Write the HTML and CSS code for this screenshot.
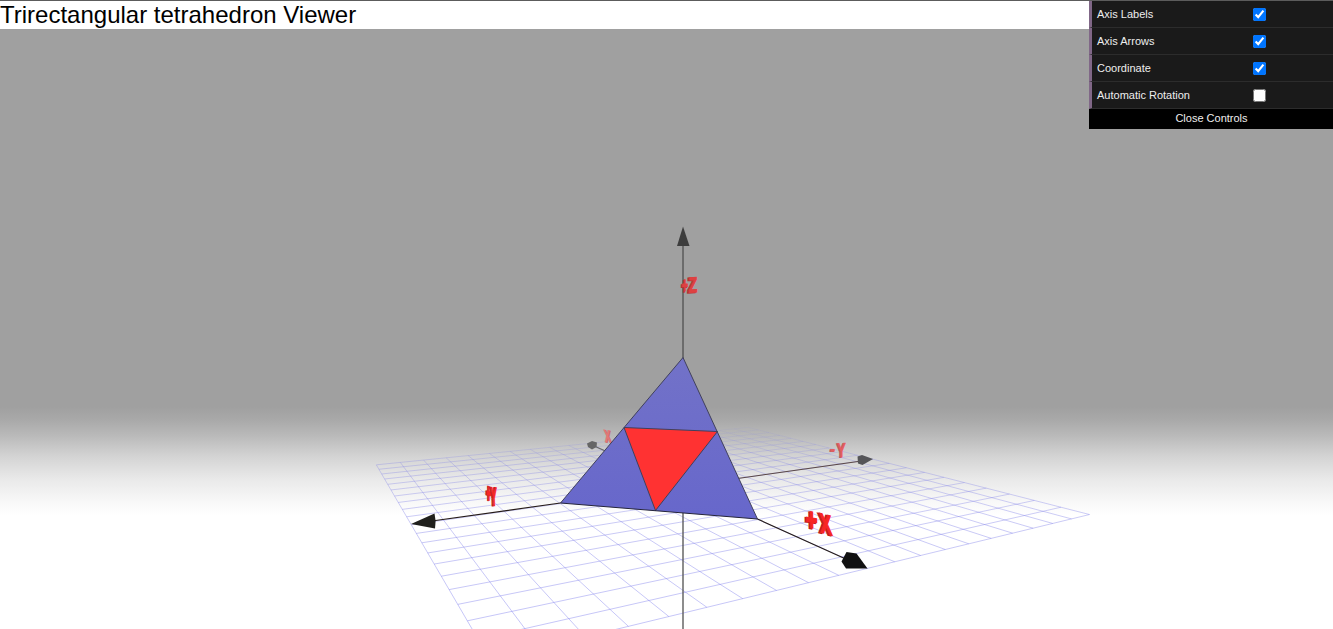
FILE: index.html
```
<!DOCTYPE html>
<html lang="en">
<head>
<meta charset="utf-8">
<title>Trirectangular tetrahedron Viewer</title>
<link rel="stylesheet" href="styles.css">
</head>
<body>
<div class="viewer">
  <header class="title">Trirectangular tetrahedron Viewer</header>
  <main class="stage">
    <svg class="scene" viewBox="0 29 1333 600" width="1333" height="600">
      <defs>
        <linearGradient id="face" x1="0" y1="0" x2="0" y2="1">
          <stop offset="0" stop-color="#7272c8"/>
          <stop offset="1" stop-color="#6767cb"/>
        </linearGradient>
        <linearGradient id="gridFog" gradientUnits="userSpaceOnUse" x1="0" y1="424" x2="0" y2="629">
          <stop offset="0" stop-color="#8080e6" stop-opacity=".05"/>
          <stop offset=".2" stop-color="#8080e6" stop-opacity=".32"/>
          <stop offset=".5" stop-color="#8080e8" stop-opacity=".42"/>
          <stop offset="1" stop-color="#8080f0" stop-opacity=".45"/>
        </linearGradient>
      </defs>
      <path id="grid" class="grid"/>

      <!-- axes behind the solid -->
      <path class="axis-far" d="M592 445 683 486"/>
      <path class="axis-y" d="M683 486.200 858 461.500"/>
      <path class="axis-z" d="M683 240V629"/>
      <path fill="#666" d="M587 443.500 592 441 597 442.500 596.500 447 592 449.500 588 447Z"/>
      <path fill="#555558" d="M857.500 456.500 862 455 873 459 862.500 465 858 463.500Z"/>
      <path fill="#3d3d3d" d="M683 226.500 689.500 246H677Z"/>

      <g class="label label-far">
        <text class="side" transform="matrix(.8 .12 .2 1.500 606 442.500)">X</text>
        <text transform="matrix(.8 .12 .2 1.500 605 442)">X</text>
      </g>
      <g class="label label-mid">
        <text class="side" transform="matrix(1.300 -.03 0 1.350 829.300 455)">-</text>
        <text transform="matrix(1.300 -.03 0 1.350 830 454.500)">-</text>
        <text class="side" transform="matrix(1.100 -.03 0 1.700 836 457.800)">Y</text>
        <text transform="matrix(1.100 -.03 0 1.700 837 457.300)">Y</text>
      </g>

      <!-- solid -->
      <path fill="url(#face)" d="M683 357.500 757.500 519 560.500 503Z"/>
      <path fill="#ff3232" d="M624 427.500 717.500 431.500 655.500 510.500Z"/>
      <path class="edge" d="M683 357.500 757.500 519 M683 357.500 560.500 503 M624 427.500 717.500 431.500 655.500 510.500Z"/>
      <path class="edge base" d="M560.500 503 757.500 519"/>

      <!-- axes in front of the solid -->
      <path class="axis-near" d="M560.500 503 432 521 M757.500 519 848 560"/>
      <path fill="#20201c" d="M411 524 434.500 513.500Q436.500 521 435 528.500Z"/>
      <path fill="#111" d="M846.500 552 856.500 553.500 867.500 568.500H846L841.500 561.500Z"/>

      <g class="label label-z">
        <text class="side" transform="matrix(.9 0 0 1.900 680.800 293.500)">+</text>
        <text transform="matrix(.9 0 0 1.900 681.800 293)">+</text>
        <text class="side" transform="matrix(1.200 -.07 0 1.800 687 293)">Z</text>
        <text transform="matrix(1.200 -.07 0 1.800 688.500 292.500)">Z</text>
      </g>
      <g class="label label-near">
        <text class="side" transform="matrix(.7 .2 0 2.200 485.500 501.500)">+</text>
        <text transform="matrix(.7 .2 0 2.200 486.500 501.500)">+</text>
        <text class="side" transform="matrix(.72 .06 .05 2.150 489.800 505.300)">Y</text>
        <text transform="matrix(.72 .06 .05 2.150 491.200 505.300)">Y</text>
      </g>
      <g class="label label-near">
        <text class="side" transform="matrix(1.650 .25 .05 2.550 804.800 529.700)">+</text>
        <text transform="matrix(1.650 .25 .05 2.550 806.100 529.200)">+</text>
        <text class="side" transform="matrix(1.450 .36 .2 2.300 819 532.500)">X</text>
        <text transform="matrix(1.450 .36 .2 2.300 820.800 532.300)">X</text>
      </g>
    </svg>
  </main>
</div>

<aside class="panel">
  <ul class="rows">
    <li class="row"><label class="name" for="labels">Axis Labels</label><span class="cell"><input class="check" id="labels" type="checkbox" checked></span></li>
    <li class="row"><label class="name" for="arrows">Axis Arrows</label><span class="cell"><input class="check" id="arrows" type="checkbox" checked></span></li>
    <li class="row"><label class="name" for="coord">Coordinate</label><span class="cell"><input class="check" id="coord" type="checkbox" checked></span></li>
    <li class="row"><label class="name" for="rotate">Automatic Rotation</label><span class="cell"><input class="check" id="rotate" type="checkbox"></span></li>
  </ul>
  <div class="close">Close Controls</div>
</aside>
<script src="grid.js"></script>
</body>
</html>
```
FILE: styles.css
```
* { box-sizing: border-box; }
body {
  margin: 0;
  overflow: hidden;
  font-family: "Liberation Sans", Arial, sans-serif;
  background: #fff;
}
.viewer {
  display: flex;
  flex-direction: column;
  height: 629px;
}
.title {
  height: 29px;
  border-top: 1px solid #5c5c5c;
  font-size: 24px;
  line-height: 28px;
  color: #000;
  white-space: nowrap;
}
.stage {
  height: 600px;
  background: linear-gradient(#a0a0a0 0, #a0a0a0 378px, #a9a9a9 391px, #bababa 407px, #d3d3d3 427px, #e9e9e9 450px, #fafafa 476px, #fff 486px);
}
.scene { display: block; }
.grid { fill: none; stroke: url(#gridFog); stroke-width: 1; }
.axis-far { stroke: #666; stroke-width: 1.2; }
.axis-y { stroke: #5b4846; stroke-width: 1.1; }
.axis-z { stroke: #505050; stroke-width: 1.3; }
.axis-near { fill: none; stroke: #251b18; stroke-width: 1.1; }
.edge { fill: none; stroke: #40405c; stroke-width: 1; }
.base { stroke: #24243a; }
.label {
  font-size: 12px;
  font-weight: bold;
  fill: #fb2525;
  stroke: #f52626;
  stroke-width: .3;
}
.label .side { fill: #c41c1c; stroke: #c41c1c; stroke-width: .7; }
.label-near { stroke-width: .7; }
.label-near .side { stroke-width: .9; }
.label-mid { fill: #e45e60; stroke: #e45e60; }
.label-mid .side { fill: #c05557; stroke: #c05557; stroke-width: .4; }
.label-far { fill: #e57777; stroke: #e57777; }
.label-far .side { fill: #bd6868; stroke: #bd6868; stroke-width: .4; }
.label-z { fill: #de4141; stroke: #de4141; stroke-width: .5; }
.label-z .side { fill: #b63333; stroke: #b63333; }

/* Control panel floating over the canvas */
.panel {
  position: absolute;
  top: 0;
  right: 0;
  width: 244px;
  font-size: 11px;
  color: #eee;
}
.rows {
  margin: 0;
  padding: 0;
  list-style: none;
  border-top: 1px solid #5c5c5c;
}
.row {
  display: flex;
  align-items: center;
  height: 27px;
  padding-left: 5px;
  background: #1a1a1a;
  border-left: 3px solid #806787;
  border-bottom: 1px solid #2c2c2c;
}
.name { width: 156.4px; }
.cell { display: flex; }
.check { width: 13px; height: 13px; margin: 0; }
.close {
  height: 20px;
  padding-left: 1px;
  line-height: 19px;
  text-align: center;
  background: #000;
}
```
FILE: grid.js
```
// Ground plane: 20 x 20 cells, perspective-projected to the canvas.
const project = (u, v) => {
  const w = 1 - 0.317 * u + 0.177 * v;
  return [
    (683 - 90.5 * u + 344.5 * v) / w,
    (486.2 - 98 * u + 54.3 * v) / w
  ].map(n => n.toFixed(2)).join(" ");
};

let lines = "";
for (let i = -10; i <= 10; i++) {
  const t = i / 10;
  lines += `M${project(t, -1)}L${project(t, 1)}`;
  lines += `M${project(-1, t)}L${project(1, t)}`;
}
document.getElementById("grid").setAttribute("d", lines);
```
